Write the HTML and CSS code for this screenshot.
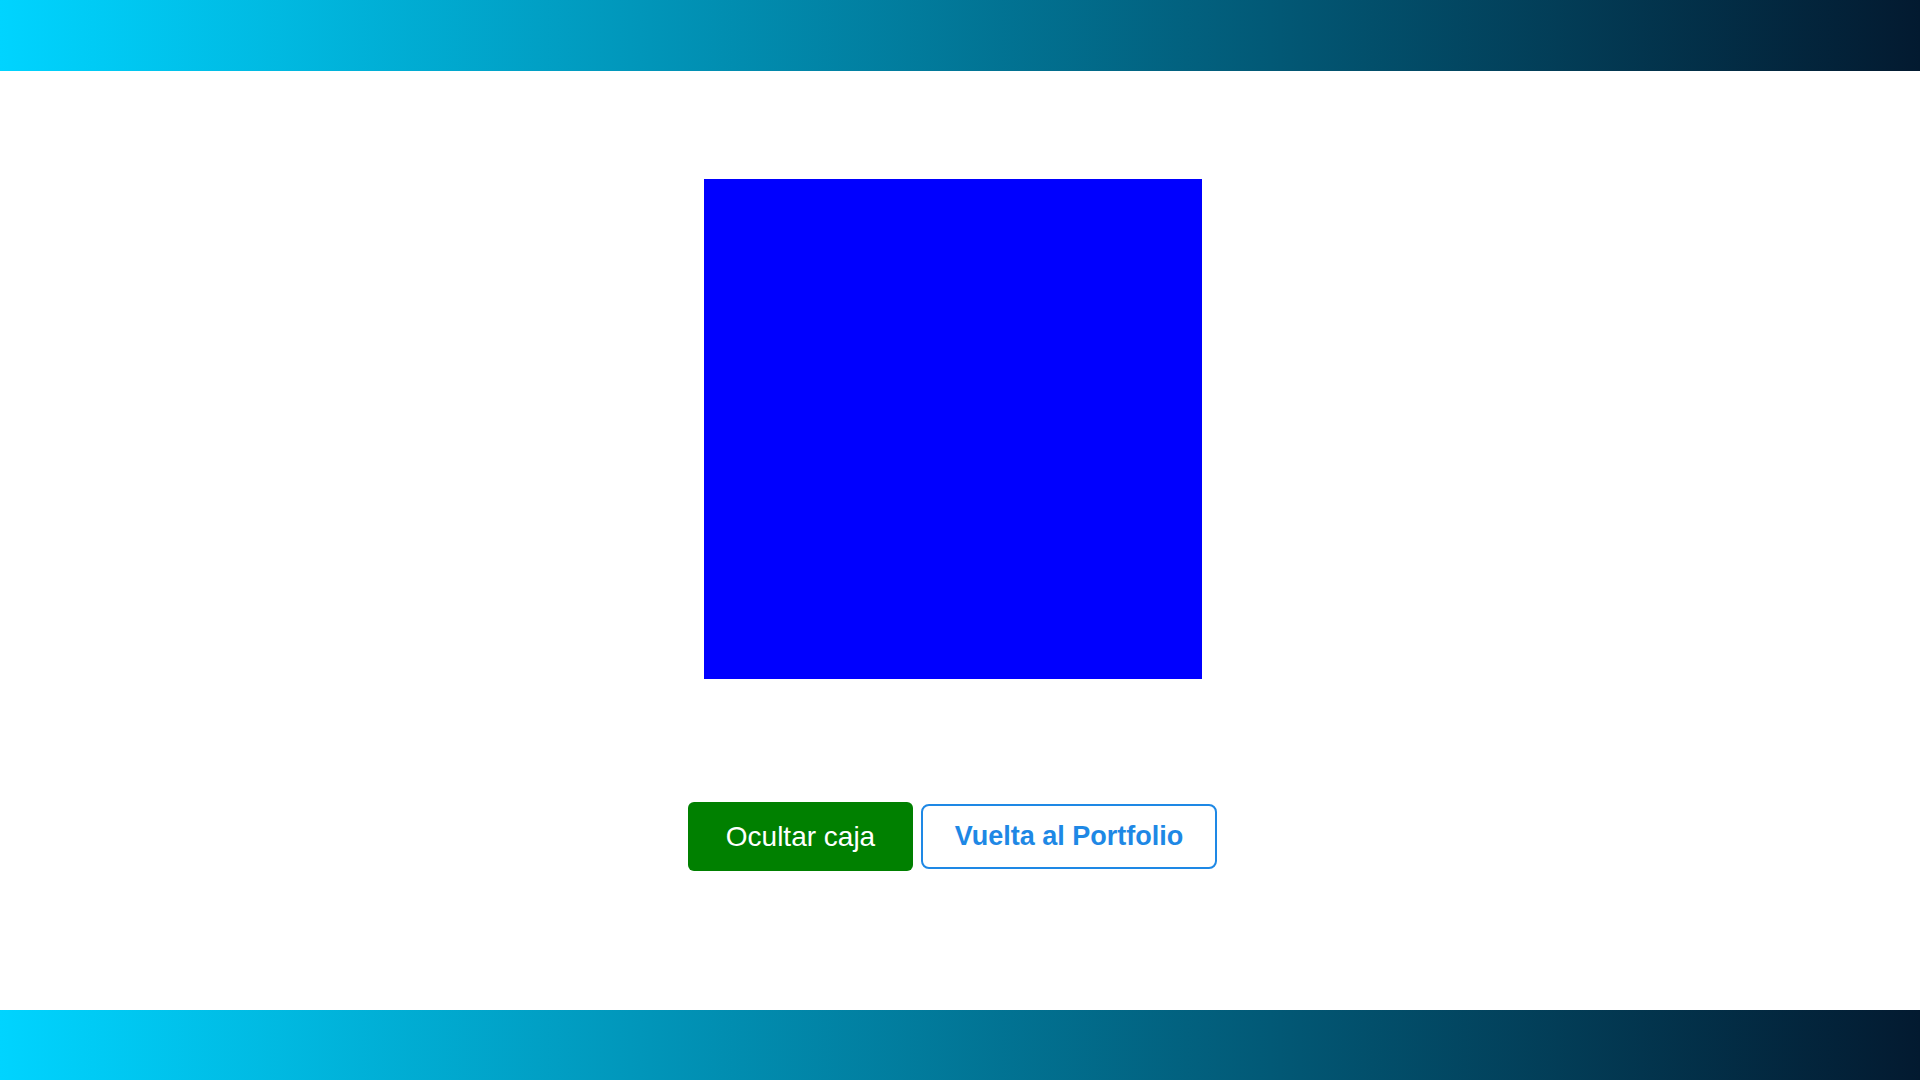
FILE: index.html
```html
<!DOCTYPE html>
<html lang="es">
<head>
<meta charset="utf-8">
<title>Caja</title>
<link rel="stylesheet" href="styles.css">
</head>
<body>
<header class="bar"></header>
<main class="main">
  <div class="box"></div>
  <div class="actions">
    <button class="btn btn-green">Ocultar caja</button>
    <a class="btn btn-outline" href="#">Vuelta al Portfolio</a>
  </div>
</main>
<footer class="bar"></footer>
</body>
</html>
```
FILE: styles.css
```css
html, body {
  margin: 0;
  padding: 0;
  height: 100%;
}
body {
  display: flex;
  flex-direction: column;
  font-family: "Liberation Sans", Arial, sans-serif;
  background: #ffffff;
}
.bar {
  height: 70.5px;
  flex: 0 0 70.5px;
  background: linear-gradient(to right, #00d4ff, #031a30);
}
.main {
  flex: 1;
  display: flex;
  flex-direction: column;
  align-items: center;
  padding: 108px 15px 0 0;
}
.box {
  width: 498px;
  height: 500px;
  background: #0000ff;
}
.actions {
  margin-top: 123.5px;
  display: flex;
  align-items: center;
  gap: 8px;
}
.btn {
  box-sizing: border-box;
  display: flex;
  align-items: center;
  justify-content: center;
  font-family: "Liberation Sans", Arial, sans-serif;
  text-decoration: none;
  cursor: pointer;
}
.btn-green {
  width: 225px;
  height: 69px;
  border: none;
  border-radius: 6px;
  background: #008000;
  color: #ffffff;
  font-size: 28px;
  padding: 0;
}
.btn-outline {
  width: 296px;
  height: 65px;
  border: 2px solid #1e88e5;
  border-radius: 8px;
  background: #ffffff;
  color: #1e88e5;
  font-size: 27px;
  font-weight: bold;
}
```
